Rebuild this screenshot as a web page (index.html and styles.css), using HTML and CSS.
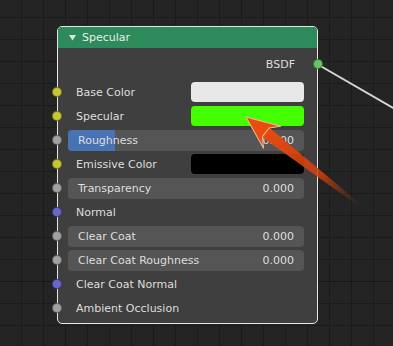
FILE: index.html
```html
<!DOCTYPE html>
<html lang="en">

<head>
    <meta charset="UTF-8">
    <meta name="viewport" content="width=device-width, initial-scale=1.0">
    <title>Specular node</title>
    <link rel="stylesheet" href="styles.css">
</head>

<body>
    <div class="editor">
        <!-- 连线 -->
        <svg class="wires" width="393" height="346">
            <line x1="317" y1="64" x2="400" y2="112" stroke="#d6d6d6" stroke-width="2" />
        </svg>

        <div class="node">
            <div class="node_head">
                <svg class="toggle" width="7" height="6" viewBox="0 0 7 6">
                    <polygon points="0,0 7,0 3.5,5.5" fill="#d8e8de" />
                </svg>
                <span>Specular</span>
            </div>
            <div class="node_body">
                <div class="row out">
                    <span>BSDF</span>
                    <i class="socket green"></i>
                </div>
                <div class="inputs">
                    <div class="row">
                        <i class="socket yellow"></i>
                        <span class="label">Base Color</span>
                        <span class="swatch" style="background-color: #e8e8e8;"></span>
                    </div>
                    <div class="row">
                        <i class="socket yellow"></i>
                        <span class="label">Specular</span>
                        <span class="swatch" style="background-color: #44ff00;"></span>
                    </div>
                    <div class="row">
                        <i class="socket grey"></i>
                        <div class="field">
                            <span class="fill" style="width: 20%;"></span>
                            <span class="name">Roughness</span>
                            <span class="value">0.200</span>
                        </div>
                    </div>
                    <div class="row">
                        <i class="socket yellow"></i>
                        <span class="label">Emissive Color</span>
                        <span class="swatch" style="background-color: #000;"></span>
                    </div>
                    <div class="row">
                        <i class="socket grey"></i>
                        <div class="field">
                            <span class="name">Transparency</span>
                            <span class="value">0.000</span>
                        </div>
                    </div>
                    <div class="row">
                        <i class="socket blue"></i>
                        <span class="label">Normal</span>
                    </div>
                    <div class="row">
                        <i class="socket grey"></i>
                        <div class="field">
                            <span class="name">Clear Coat</span>
                            <span class="value">0.000</span>
                        </div>
                    </div>
                    <div class="row">
                        <i class="socket grey"></i>
                        <div class="field">
                            <span class="name">Clear Coat Roughness</span>
                            <span class="value">0.000</span>
                        </div>
                    </div>
                    <div class="row">
                        <i class="socket blue"></i>
                        <span class="label">Clear Coat Normal</span>
                    </div>
                    <div class="row">
                        <i class="socket grey"></i>
                        <span class="label">Ambient Occlusion</span>
                    </div>
                </div>
            </div>
        </div>

        <!-- 指示箭头 -->
        <svg class="pointer" width="393" height="346">
            <defs>
                <linearGradient id="shaft" gradientUnits="userSpaceOnUse" x1="24" y1="0" x2="142" y2="0">
                    <stop offset="0" stop-color="#e8480e" stop-opacity="1" />
                    <stop offset="0.6" stop-color="#d0420f" stop-opacity="0.85" />
                    <stop offset="1" stop-color="#8a3a1c" stop-opacity="0.05" />
                </linearGradient>
            </defs>
            <g transform="translate(246 117) rotate(37.8)">
                <polygon points="24,-6 142,-1.5 142,1.5 24,6" fill="url(#shaft)" />
                <polygon points="0,0 33,-14 25,-5.5 25,5.5 33,14" fill="#ea4c10" stroke="#f6b89a"
                    stroke-width="1" stroke-linejoin="round" />
            </g>
        </svg>
    </div>
</body>

</html>
```

FILE: styles.css
```css
* {
    margin: 0;
    padding: 0;
    box-sizing: border-box;
}

body {
    background-color: #232323;
    font-family: "DejaVu Sans", "Liberation Sans", sans-serif;
    font-size: 11px;
    color: #dedede;
}

.editor {
    position: relative;
    width: 393px;
    height: 346px;
    overflow: hidden;
    background-color: #242424;
    background-image:
        linear-gradient(to bottom, transparent 264px, #161616 264px, #161616 265px, transparent 265px),
        linear-gradient(to right, #1b1b1b 1px, transparent 1px),
        linear-gradient(to bottom, #1b1b1b 1px, transparent 1px);
    background-size: 393px 346px, 22px 22px, 22px 22px;
    background-position: 0 17px, 21px 0, 0 17px;
    background-repeat: no-repeat, repeat, repeat;
}

.wires {
    position: absolute;
    top: 0;
    left: 0;
    z-index: 1;
}

.pointer {
    position: absolute;
    top: 0;
    left: 0;
    z-index: 3;
}

.node {
    position: absolute;
    left: 57px;
    top: 26px;
    width: 261px;
    z-index: 2;
    border: 1px solid #e6e6e6;
    border-radius: 5px;
    background-color: #3f3f3f;
}

.node_head {
    display: flex;
    align-items: center;
    gap: 6px;
    height: 21px;
    padding-left: 11px;
    background-color: #2d8a5b;
    border-radius: 4px 4px 0 0;
    color: #e8efea;
}

.node_body {
    padding: 4px 0 3px;
}

.inputs {
    margin-top: 4px;
}

.row {
    position: relative;
    display: flex;
    align-items: center;
    height: 24px;
    padding-right: 13px;
}

.row.out {
    justify-content: flex-end;
    padding-right: 22px;
}

.label {
    flex: 1;
    padding-left: 18px;
}

.socket {
    position: absolute;
    top: 50%;
    left: -6px;
    width: 10px;
    height: 10px;
    margin-top: -5px;
    border-radius: 50%;
    border: 1px solid rgba(0, 0, 0, .4);
}

.row.out .socket {
    left: auto;
    right: -6px;
}

.yellow {
    background-color: #c7c635;
}

.grey {
    background-color: #a1a1a1;
}

.blue {
    background-color: #6767cf;
}

.green {
    background-color: #63c763;
}

.swatch {
    width: 113px;
    height: 20px;
    border-radius: 4px;
}

.field {
    position: relative;
    flex: 1;
    display: flex;
    justify-content: space-between;
    align-items: center;
    height: 21px;
    margin-left: 10px;
    padding: 0 10px;
    border-radius: 4px;
    background-color: #555555;
    overflow: hidden;
}

.fill {
    position: absolute;
    top: 0;
    left: 0;
    height: 100%;
    background-color: #4772b3;
}

.name,
.value {
    position: relative;
}
```
